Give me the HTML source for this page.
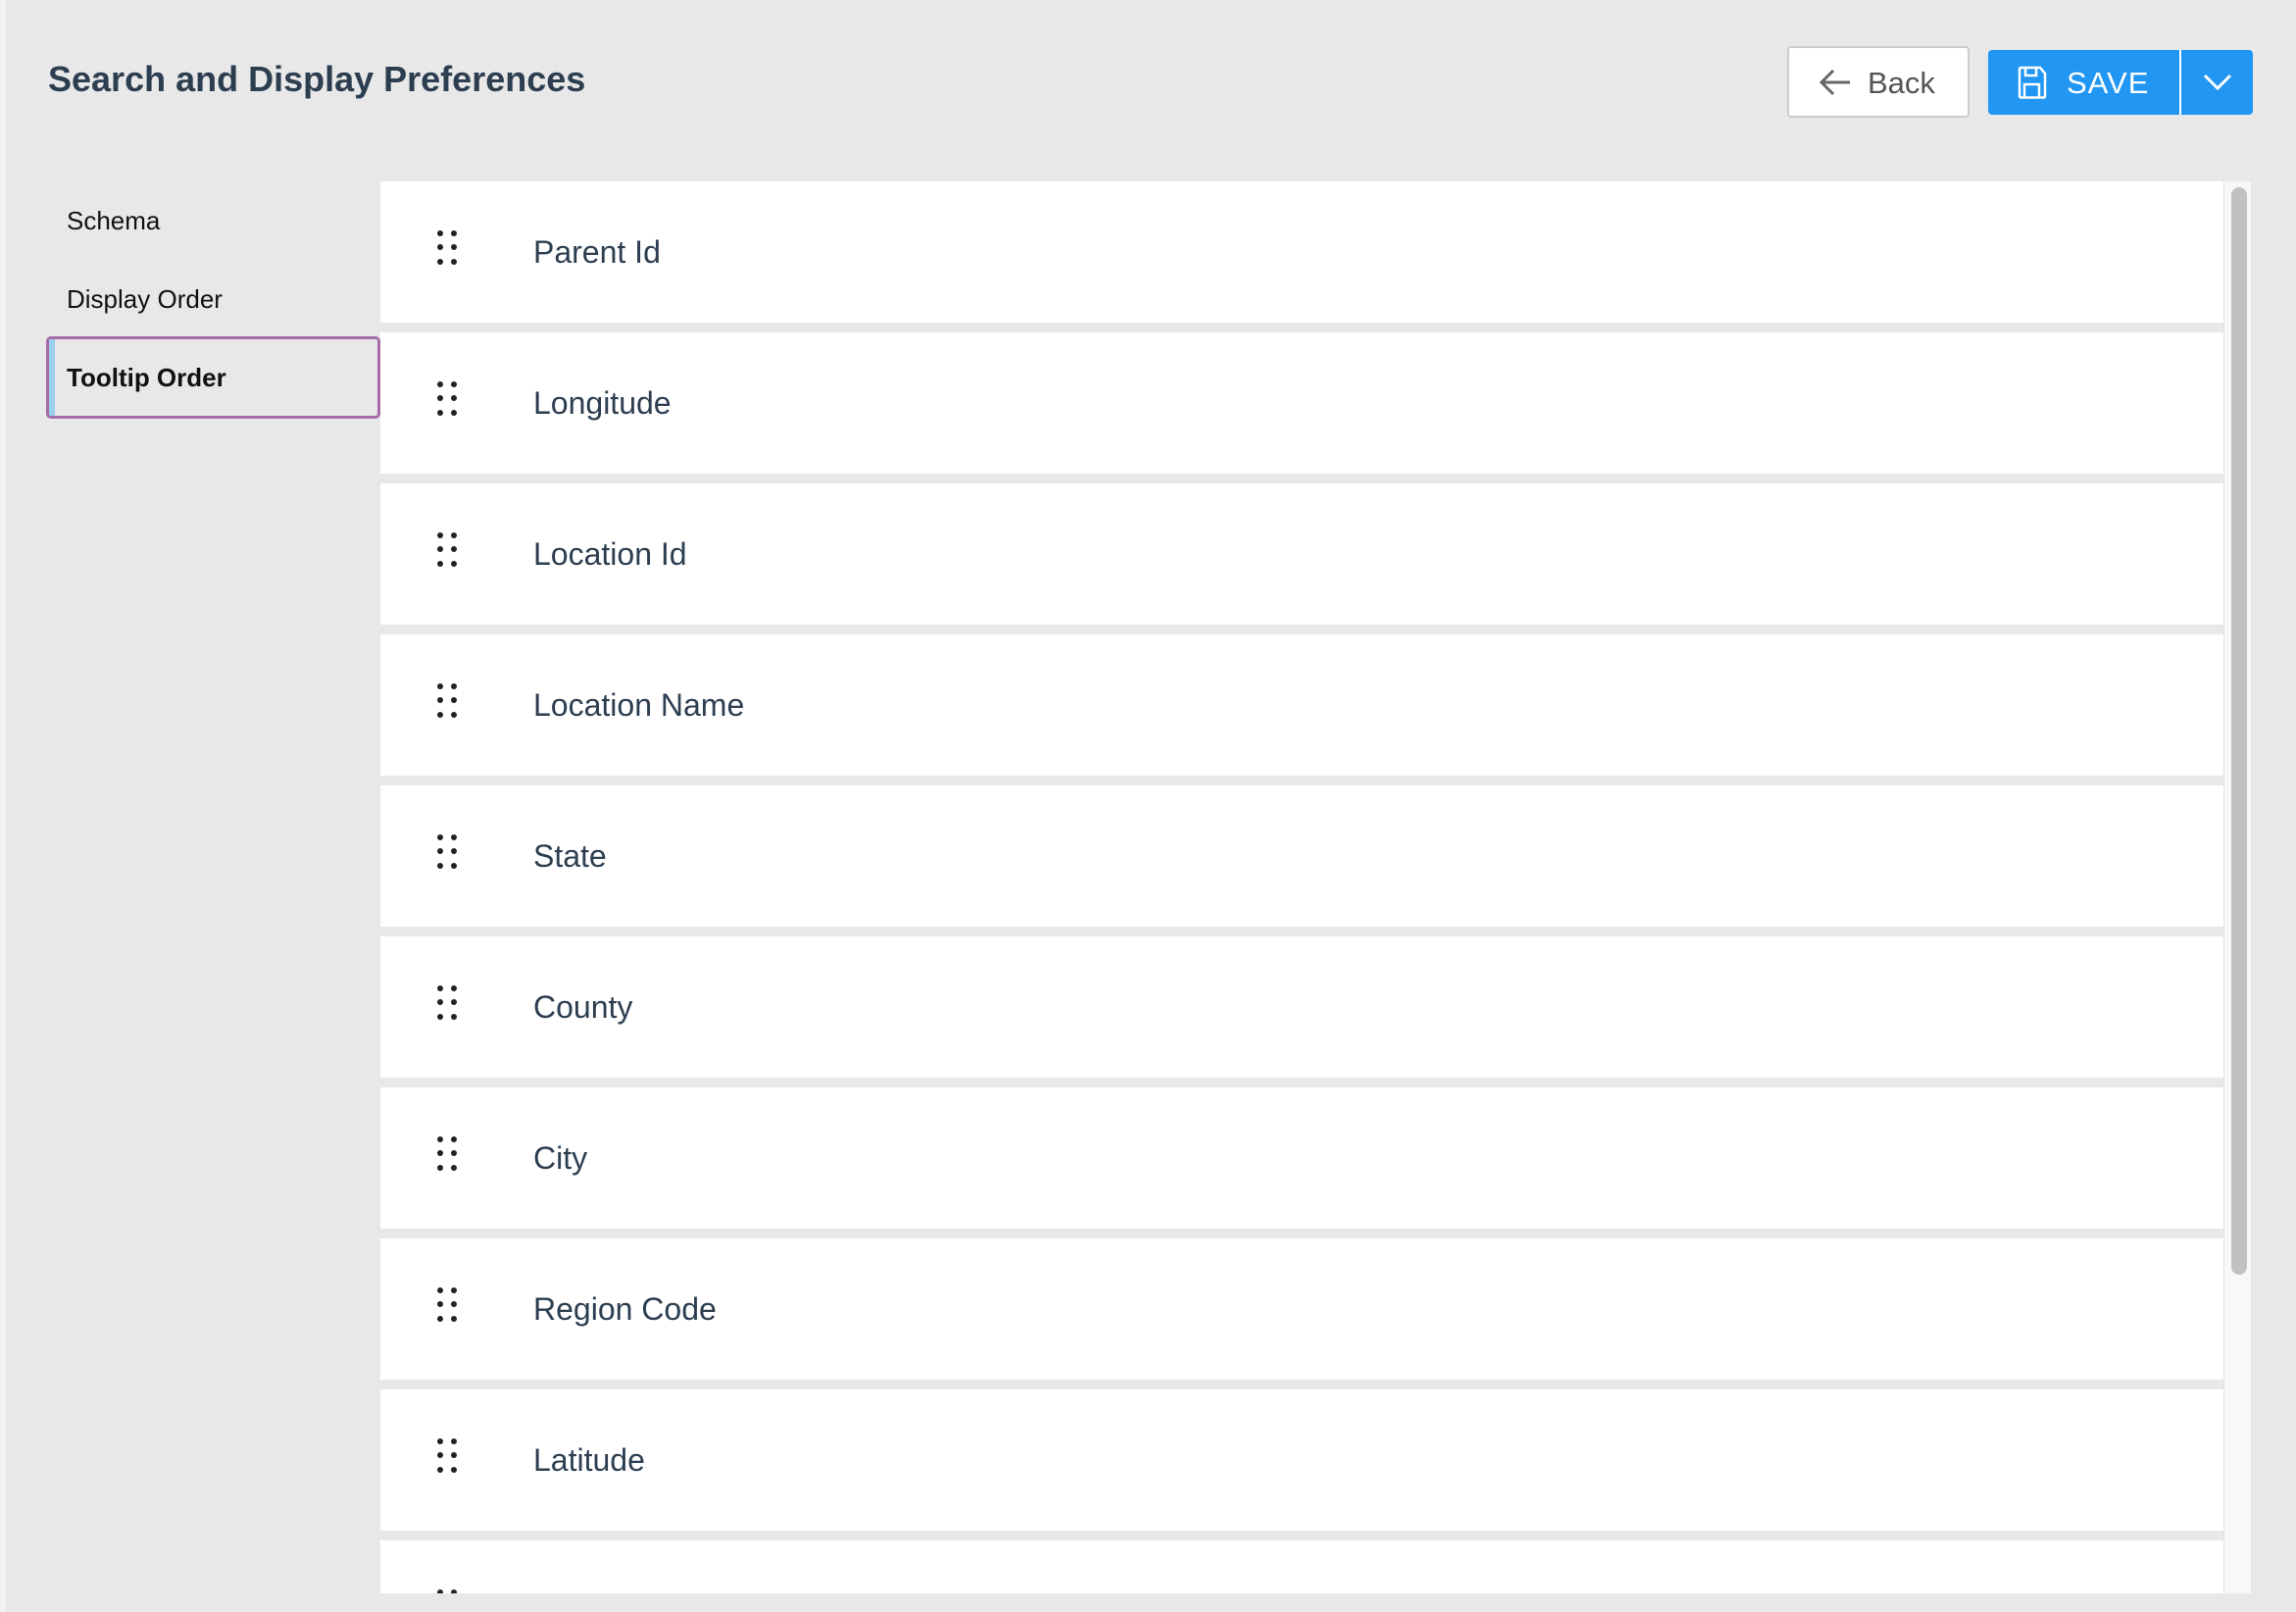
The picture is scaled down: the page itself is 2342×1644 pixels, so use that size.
<!DOCTYPE html>
<html><head><meta charset="utf-8"><style>
*{margin:0;padding:0;box-sizing:border-box}
body{width:2342px;height:1644px;background:#e8e8e8;font-family:"Liberation Sans",Arial,sans-serif;position:relative;overflow:hidden}
.strip{position:absolute;left:0;top:0;width:6px;height:1644px;background:#f2f2f2}
h1{position:absolute;left:49px;top:61px;font-size:36px;font-weight:bold;color:#2c3e50;line-height:40px}
.back{position:absolute;left:1823px;top:47px;width:186px;height:73px;background:#fff;border:2px solid #ccc;border-radius:4px;color:#555;font-size:31px}
.back span{position:absolute;left:80px;top:18px}
.save{position:absolute;left:2028px;top:51px;width:270px;height:66px;background:#2196f3;border-radius:4px;color:#fff;font-size:31px}
.save .t{position:absolute;left:80px;top:16px;letter-spacing:1px}
.save .div{position:absolute;left:195px;top:0;width:2px;height:66px;background:#fff}
.nav{position:absolute;left:68px;font-size:26px;color:#111}
.sel{position:absolute;left:47px;top:343px;width:341px;height:84px;border:3px solid #a56ca8;border-radius:5px;background:#e8e8e8}
.sel::before{content:"";position:absolute;left:0;top:0;width:6px;height:100%;background:#9ccff0}
.list{position:absolute;left:388px;top:185px;width:1908px;height:1440px;overflow:hidden}
.row{position:absolute;left:0;width:1880px;height:144px;background:#fff}
.row .lbl{position:absolute;left:156px;top:54px;font-size:32px;color:#2c3e50}
.row svg{position:absolute;left:56px;top:48px}
.track{position:absolute;left:1880px;top:0;width:28px;height:1440px;background:#f8f8f8;border-left:1px solid #e4e4e4}
.thumb{position:absolute;left:1888px;top:6px;width:16px;height:1109px;background:#c1c1c1;border-radius:8px}
</style></head><body>
<div class="strip"></div>
<h1>Search and Display Preferences</h1>
<div class="back"><svg style="position:absolute;left:30px;top:20px" width="34" height="30" viewBox="0 0 34 30"><path d="M32 15H3M15 3L3 15l12 12" fill="none" stroke="#666" stroke-width="3"/></svg><span>Back</span></div>
<div class="save">
<svg style="position:absolute;left:30px;top:16px" width="30" height="34" viewBox="0 0 30 34"><path d="M3 2h20l5 6v23a1.5 1.5 0 0 1-1.5 1.5h-23A1.5 1.5 0 0 1 2 31V3.5A1.5 1.5 0 0 1 3 2z" fill="none" stroke="#fff" stroke-width="2.5"/><path d="M8 2v8h11V2M7 32V19h15v13" fill="none" stroke="#fff" stroke-width="2.5"/></svg>
<span class="t">SAVE</span><div class="div"></div>
<svg style="position:absolute;left:218px;top:22px" width="32" height="22" viewBox="0 0 32 22"><path d="M3 4l13 13L29 4" fill="none" stroke="#fff" stroke-width="3"/></svg>
</div>
<div class="nav" style="top:210px">Schema</div>
<div class="nav" style="top:290px">Display Order</div>
<div class="sel"></div>
<div class="nav" style="top:370px;font-weight:bold">Tooltip Order</div>
<div class="list">
<div class="row" style="top:0"><svg width="24" height="40"><g fill="#222"><circle cx="5" cy="5" r="3"/><circle cx="19" cy="5" r="3"/><circle cx="5" cy="19" r="3"/><circle cx="19" cy="19" r="3"/><circle cx="5" cy="34" r="3"/><circle cx="19" cy="34" r="3"/></g></svg><span class="lbl">Parent Id</span></div>
<div class="row" style="top:154px"><svg width="24" height="40"><g fill="#222"><circle cx="5" cy="5" r="3"/><circle cx="19" cy="5" r="3"/><circle cx="5" cy="19" r="3"/><circle cx="19" cy="19" r="3"/><circle cx="5" cy="34" r="3"/><circle cx="19" cy="34" r="3"/></g></svg><span class="lbl">Longitude</span></div>
<div class="row" style="top:308px"><svg width="24" height="40"><g fill="#222"><circle cx="5" cy="5" r="3"/><circle cx="19" cy="5" r="3"/><circle cx="5" cy="19" r="3"/><circle cx="19" cy="19" r="3"/><circle cx="5" cy="34" r="3"/><circle cx="19" cy="34" r="3"/></g></svg><span class="lbl">Location Id</span></div>
<div class="row" style="top:462px"><svg width="24" height="40"><g fill="#222"><circle cx="5" cy="5" r="3"/><circle cx="19" cy="5" r="3"/><circle cx="5" cy="19" r="3"/><circle cx="19" cy="19" r="3"/><circle cx="5" cy="34" r="3"/><circle cx="19" cy="34" r="3"/></g></svg><span class="lbl">Location Name</span></div>
<div class="row" style="top:616px"><svg width="24" height="40"><g fill="#222"><circle cx="5" cy="5" r="3"/><circle cx="19" cy="5" r="3"/><circle cx="5" cy="19" r="3"/><circle cx="19" cy="19" r="3"/><circle cx="5" cy="34" r="3"/><circle cx="19" cy="34" r="3"/></g></svg><span class="lbl">State</span></div>
<div class="row" style="top:770px"><svg width="24" height="40"><g fill="#222"><circle cx="5" cy="5" r="3"/><circle cx="19" cy="5" r="3"/><circle cx="5" cy="19" r="3"/><circle cx="19" cy="19" r="3"/><circle cx="5" cy="34" r="3"/><circle cx="19" cy="34" r="3"/></g></svg><span class="lbl">County</span></div>
<div class="row" style="top:924px"><svg width="24" height="40"><g fill="#222"><circle cx="5" cy="5" r="3"/><circle cx="19" cy="5" r="3"/><circle cx="5" cy="19" r="3"/><circle cx="19" cy="19" r="3"/><circle cx="5" cy="34" r="3"/><circle cx="19" cy="34" r="3"/></g></svg><span class="lbl">City</span></div>
<div class="row" style="top:1078px"><svg width="24" height="40"><g fill="#222"><circle cx="5" cy="5" r="3"/><circle cx="19" cy="5" r="3"/><circle cx="5" cy="19" r="3"/><circle cx="19" cy="19" r="3"/><circle cx="5" cy="34" r="3"/><circle cx="19" cy="34" r="3"/></g></svg><span class="lbl">Region Code</span></div>
<div class="row" style="top:1232px"><svg width="24" height="40"><g fill="#222"><circle cx="5" cy="5" r="3"/><circle cx="19" cy="5" r="3"/><circle cx="5" cy="19" r="3"/><circle cx="19" cy="19" r="3"/><circle cx="5" cy="34" r="3"/><circle cx="19" cy="34" r="3"/></g></svg><span class="lbl">Latitude</span></div>
<div class="row" style="top:1386px"><svg width="24" height="40"><g fill="#222"><circle cx="5" cy="5" r="3"/><circle cx="19" cy="5" r="3"/><circle cx="5" cy="19" r="3"/><circle cx="19" cy="19" r="3"/><circle cx="5" cy="34" r="3"/><circle cx="19" cy="34" r="3"/></g></svg></div>
<div class="track"></div><div class="thumb"></div>
</div>
</body></html>
